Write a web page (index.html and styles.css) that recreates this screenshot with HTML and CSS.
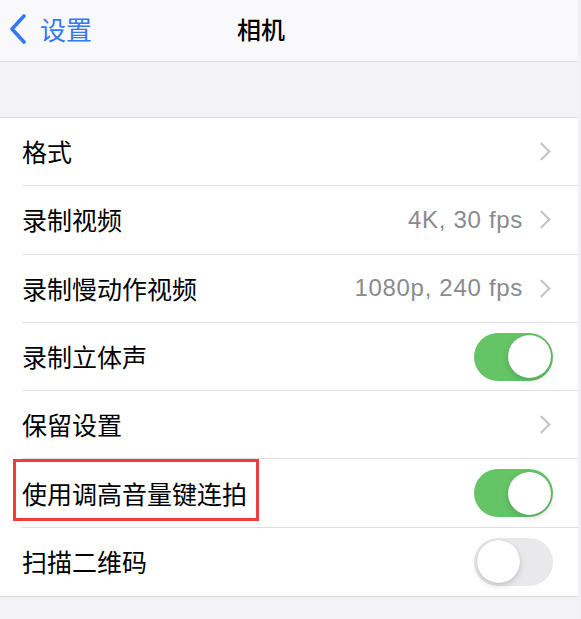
FILE: index.html
```html
<!DOCTYPE html>
<html lang="zh-CN">
<head>
    <meta charset="UTF-8">
    <meta name="viewport" content="width=device-width, initial-scale=1.0">
    <title>相机</title>
    <link rel="stylesheet" href="styles.css">
</head>
<body>
    <div class="screen">
        <header class="nav-bar">
            <a class="nav-back" href="#">
                <svg class="back-chevron" width="18" height="30" viewBox="0 0 18 30">
                    <path d="M15 2 L3 15 L15 28" fill="none" stroke="#3478f6" stroke-width="3.6" stroke-linecap="round" stroke-linejoin="round"/>
                </svg>
                <span>设置</span>
            </a>
            <h1 class="nav-title">相机</h1>
        </header>

        <div class="group-gap"></div>

        <ul class="settings-list">
            <li class="settings-row">
                <span class="row-label">格式</span>
                <span class="row-accessory"><span class="chevron"></span></span>
            </li>
            <li class="settings-row">
                <span class="row-label">录制视频</span>
                <span class="row-accessory"><span class="row-value">4K, 30 fps</span><span class="chevron"></span></span>
            </li>
            <li class="settings-row">
                <span class="row-label">录制慢动作视频</span>
                <span class="row-accessory"><span class="row-value">1080p, 240 fps</span><span class="chevron"></span></span>
            </li>
            <li class="settings-row">
                <span class="row-label">录制立体声</span>
                <span class="switch on"><span class="knob"></span></span>
            </li>
            <li class="settings-row">
                <span class="row-label">保留设置</span>
                <span class="row-accessory"><span class="chevron"></span></span>
            </li>
            <li class="settings-row highlighted">
                <span class="row-label">使用调高音量键连拍</span>
                <span class="switch on"><span class="knob"></span></span>
                <span class="mark-box"></span>
            </li>
            <li class="settings-row">
                <span class="row-label">扫描二维码</span>
                <span class="switch"><span class="knob"></span></span>
            </li>
        </ul>
    </div>
</body>
</html>
```

FILE: styles.css
```css
body {
    margin: 0;
    padding: 0;
    background-color: #f1f1f5;
    font-family: 'Noto Sans CJK SC', 'Noto Sans', sans-serif;
    color: #000;
}

.screen {
    width: 578px;
    height: 619px;
    background-color: #f2f2f7;
    overflow: hidden;
}

/* top navigation */
.nav-bar {
    height: 62px;
    box-sizing: border-box;
    padding-bottom: 4px;
    background-color: #f9f9fb;
    border-bottom: 1px solid #dcdce0;
    display: flex;
    align-items: center;
}

.nav-back {
    display: flex;
    align-items: center;
    text-decoration: none;
    color: #3478f6;
    font-size: 26px;
    padding-left: 9px;
    width: 237px;
    box-sizing: border-box;
}

.back-chevron {
    margin-right: 13px;
}

.nav-title {
    margin: 0;
    font-size: 24px;
    font-weight: 500;
}

.group-gap {
    height: 55px;
    border-bottom: 1px solid #d8d8dc;
}

/* list */
.settings-list {
    list-style: none;
    margin: 0;
    padding: 0 0 0 22px;
    background-color: #fff;
    border-bottom: 1px solid #d8d8dc;
}

.settings-row {
    position: relative;
    height: 68.3px;
    box-sizing: border-box;
    display: flex;
    align-items: center;
    justify-content: space-between;
    padding-right: 25px;
    border-bottom: 1px solid #dedee2;
}

.settings-row:last-child {
    border-bottom: none;
}

.row-label {
    font-size: 25px;
    line-height: 1;
}

.row-accessory {
    display: flex;
    align-items: center;
}

.row-value {
    font-family: 'Liberation Sans', sans-serif;
    font-size: 24px;
    letter-spacing: 0.7px;
    color: #8a8a8e;
    margin-right: 12px;
}

.chevron {
    width: 11px;
    height: 11px;
    border-top: 2.5px solid #c4c4c7;
    border-right: 2.5px solid #c4c4c7;
    transform: rotate(45deg);
    margin-right: 5px;
}

/* toggle switch */
.switch {
    width: 79px;
    height: 48px;
    border-radius: 24px;
    background-color: #e9e9eb;
    display: flex;
    align-items: center;
    padding: 0 2.5px;
    box-sizing: border-box;
}

.switch.on {
    background-color: #65c466;
    justify-content: flex-end;
}

.knob {
    width: 43px;
    height: 43px;
    border-radius: 50%;
    background-color: #fff;
    box-shadow: 0 3px 6px rgba(0, 0, 0, 0.15), 0 0 1px rgba(0, 0, 0, 0.2);
}

/* red outline drawn over the row */
.mark-box {
    position: absolute;
    left: -9px;
    top: 0;
    width: 246px;
    height: 62px;
    border: 3px solid #f03c3c;
    box-sizing: border-box;
}
```
